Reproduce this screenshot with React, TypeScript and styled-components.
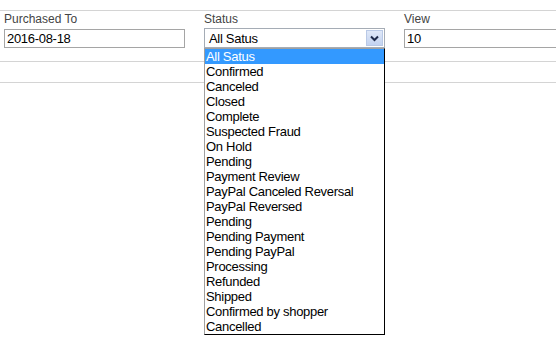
import React from 'react';
import styled, { createGlobalStyle } from 'styled-components';

const GlobalStyle = createGlobalStyle`
  html, body {
    margin: 0;
    background: #fff;
    font-family: "Liberation Sans", Arial, sans-serif;
  }
  #root {
    min-height: 358px;
  }
`;

const FilterBar = styled.div`
  margin-top: 10px;
  border-top: 1px solid #d4d4d4;
  border-bottom: 1px solid #d4d4d4;
  position: relative;
`;

const FieldRow = styled.div`
  display: flex;
  padding: 0 0 13px 4px;
`;

const Field = styled.div<{ $fill?: boolean }>`
  width: 200px;
  flex: ${(p) => (p.$fill ? '1 1 auto' : '0 0 200px')};
  min-width: 0;
  position: relative;
`;

const Label = styled.div`
  font-size: 12px;
  line-height: 16px;
  color: #444;
  height: 16px;
`;

const TextBox = styled.div<{ $open?: boolean }>`
  margin-top: 2px;
  box-sizing: border-box;
  width: ${(p) => (p.$open ? '100%' : '181px')};
  height: 19px;
  border: 1px solid #a5a5a5;
  border-right-width: ${(p) => (p.$open ? '0' : '1px')};
  font-size: 13px;
  letter-spacing: -0.3px;
  line-height: 17px;
  padding-left: 2px;
  color: #000;
`;

const SelectBox = styled.div`
  margin-top: 1px;
  box-sizing: border-box;
  width: 181px;
  height: 20px;
  border: 1px solid #a5acb5;
  display: flex;
  align-items: center;
  justify-content: space-between;
  font-size: 13px;
  letter-spacing: -0.3px;
  padding-left: 4px;
  color: #000;
`;

const ArrowButton = styled.div`
  width: 17px;
  height: 16px;
  margin-right: 1px;
  box-sizing: border-box;
  border: 1px solid #b9c9e6;
  background: linear-gradient(#dfe8f8, #c3d3f0);
  display: flex;
  align-items: center;
  justify-content: center;
`;

const SecondBand = styled.div`
  height: 20px;
  border-top: 1px solid #d4d4d4;
`;

const OptionList = styled.ul`
  position: absolute;
  left: 0;
  top: 37px;
  width: 181px;
  box-sizing: border-box;
  margin: 0;
  padding: 0;
  list-style: none;
  background: #fff;
  border: 1px solid #000;
  border-left-color: #a0a0a0;
  border-top-color: #a0a0a0;
  z-index: 2;
`;

const Option = styled.li<{ $selected?: boolean }>`
  height: 15px;
  line-height: 15px;
  font-size: 13px;
  letter-spacing: -0.3px;
  padding-left: 1px;
  color: ${(p) => (p.$selected ? '#fff' : '#000')};
  background: ${(p) => (p.$selected ? '#3399ff' : 'transparent')};
  white-space: nowrap;
`;

const statuses = [
  'All Satus',
  'Confirmed',
  'Canceled',
  'Closed',
  'Complete',
  'Suspected Fraud',
  'On Hold',
  'Pending',
  'Payment Review',
  'PayPal Canceled Reversal',
  'PayPal Reversed',
  'Pending',
  'Pending Payment',
  'Pending PayPal',
  'Processing',
  'Refunded',
  'Shipped',
  'Confirmed by shopper',
  'Cancelled',
];

const App: React.FC = () => {
  return (
    <>
      <GlobalStyle />
      <FilterBar>
        <FieldRow>
          <Field>
            <Label>Purchased To</Label>
            <TextBox>2016-08-18</TextBox>
          </Field>
          <Field>
            <Label>Status</Label>
            <SelectBox>
              All Satus
              <ArrowButton>
                <svg width="9" height="7" viewBox="0 0 9 7">
                  <path d="M1 1.5 L4.5 5 L8 1.5" fill="none" stroke="#1e2a4a" strokeWidth="2" />
                </svg>
              </ArrowButton>
            </SelectBox>
            <OptionList>
              {statuses.map((s, i) => (
                <Option key={i} $selected={i === 0}>
                  {s}
                </Option>
              ))}
            </OptionList>
          </Field>
          <Field $fill>
            <Label>View</Label>
            <TextBox $open>10</TextBox>
          </Field>
        </FieldRow>
        <SecondBand />
      </FilterBar>
    </>
  );
};

export default App;
